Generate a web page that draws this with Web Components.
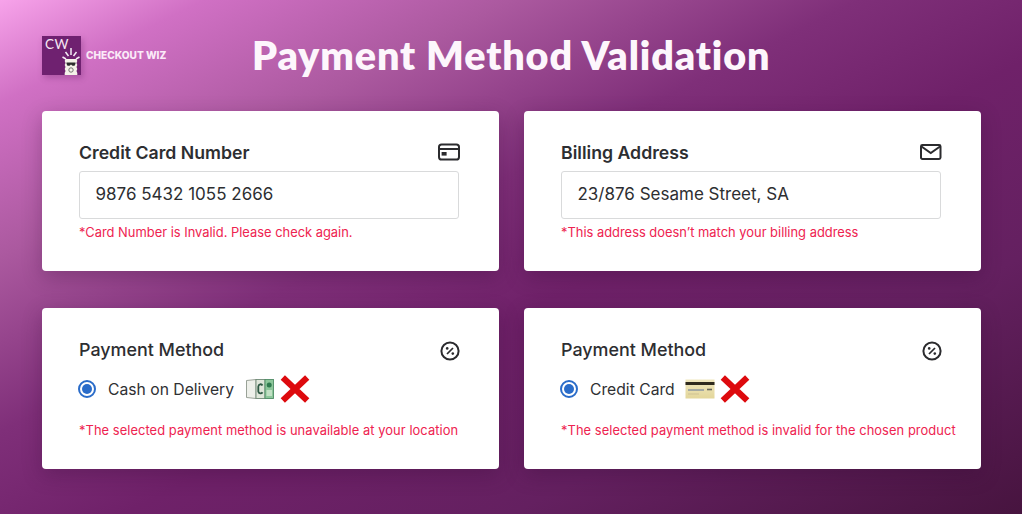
<!DOCTYPE html>
<html><head><meta charset="utf-8"><style>
html,body{margin:0;padding:0;}
body{width:1022px;height:514px;overflow:hidden;font-family:Inter,sans-serif;}
</style></head><body>
<checkout-page>
<pay-card slot="card" label="Credit Card Number" icon="card" strong>
<text-box>9876 5432 1055 2666</text-box>
<err-note>*Card Number is Invalid. Please check again.</err-note>
</pay-card>
<pay-card slot="card" label="Billing Address" icon="mail" strong>
<text-box>23/876 Sesame Street, SA</text-box>
<err-note>*This address doesn’t match your billing address</err-note>
</pay-card>
<pay-card slot="card" label="Payment Method" icon="percent">
<radio-row kind="cash">Cash on Delivery</radio-row>
<err-note spaced>*The selected payment method is unavailable at your location</err-note>
</pay-card>
<pay-card slot="card" label="Payment Method" icon="percent">
<radio-row kind="credit">Credit Card</radio-row>
<err-note spaced>*The selected payment method is invalid for the chosen product</err-note>
</pay-card>
</checkout-page>
<script>
const ICONS={
card:'<svg width="22" height="18" viewBox="0 0 22 18" fill="none" stroke="#2b2b2e" stroke-width="2"><rect x="1" y="1.5" width="20" height="15" rx="2.6"/><path d="M1 6h20"/><rect x="3.6" y="9" width="5" height="3.6" fill="#2b2b2e" stroke="none"/></svg>',
mail:'<svg width="22" height="18" viewBox="0 0 22 18" fill="none" stroke="#2b2b2e" stroke-width="2"><rect x="1" y="2" width="19.5" height="14" rx="1.4"/><path d="M1.5 3.500 10.750 10 20 3.500"/></svg>',
percent:'<svg width="20" height="20" viewBox="0 0 20 20" fill="none" stroke="#2b2b2e"><circle cx="10" cy="10" r="8.600" stroke-width="2"/><path d="M7 13 13 7" stroke-width="1.700"/><circle cx="7.200" cy="7.400" r="1.300" fill="#2b2b2e" stroke="none"/><circle cx="12.800" cy="12.600" r="1.300" fill="#2b2b2e" stroke="none"/></svg>'};
const CROSS='<svg width="30" height="28" viewBox="0 0 30 28"><path d="M2.800 2.500 27.200 25.500M27.200 2.500 2.800 25.500" stroke="#dd0a0e" stroke-width="6.200" fill="none"/></svg>';
const CASH='<svg width="29" height="20" viewBox="0 0 29 20"><path d="M1.500 1.500 11 .5V19.500L1.500 18.500Z" fill="#eef0ea" stroke="#8f978c" stroke-width=".9"/><rect x="11" y=".5" width="9" height="19" fill="#dfe6da" stroke="#6f8a76" stroke-width=".9"/><path d="M17.500 6.500c-1-2-4-1.500-4.200 1v5c.4 2.300 3.200 2.500 4.200.8" fill="none" stroke="#2f5a44" stroke-width="1.800"/><rect x="20" y=".5" width="8.500" height="19" fill="#8cc79a" stroke="#4f8c66" stroke-width=".9"/><circle cx="24.200" cy="6" r="2.500" fill="#2f7a4e"/><rect x="21.500" y="11" width="5.500" height="6" fill="#c1e0c4"/></svg>';
const CREDIT='<svg width="30" height="20" viewBox="0 0 30 20"><defs><linearGradient id="cg" x1="0" y1="0" x2="0" y2="1"><stop offset="0" stop-color="#f0e8c0"/><stop offset="1" stop-color="#e3d69a"/></linearGradient></defs><rect x="0.500" y="0.500" width="29" height="19" fill="url(#cg)"/><rect x="0.500" y="3" width="29" height="3" fill="#2e2a1e"/><path d="M3 11h16" stroke="#a3a8a2" stroke-width="2"/><path d="M22 10.500h5" stroke="#66665c" stroke-width="1.600"/><path d="M3 15h11" stroke="#cfc193"/></svg>';
function def(name,css,html){
  customElements.define(name,class extends HTMLElement{
    constructor(){super();const s=this.attachShadow({mode:'open'});s.innerHTML='<style>'+css+'</style>'+(typeof html==='function'?html(this):html);}
  });
}
def('cw-logo',`
:host{display:flex;align-items:center;gap:5px;width:210px;flex:none;position:relative;top:-1px}
.tile{width:39px;height:39px;background:#6f2170;position:relative;box-shadow:2px 3px 6px rgba(70,10,70,.25);flex:none;overflow:hidden}
.cw{position:absolute;left:3px;top:1px;color:#f6e7f4;font:400 13.500px/15px Lato,sans-serif;letter-spacing:.4px}
svg{position:absolute;left:20px;top:12px}
.name{font:800 10.100px/1 Inter,sans-serif;color:#fbeaf8;margin-top:1px;white-space:nowrap}
`,`<div class="tile"><span class="cw">CW</span><svg width="18" height="27" viewBox="0 0 18 27"><path d="M9 0v7M3.500 4l3 4M14.500 4l-3 4M.5 9l3.500 2M17.500 9l-3.500 2" stroke="#f5edf5" stroke-width="1.500"/><path d="M3.500 11h11l.8 2-.8 2 .8 2-.8 2 .8 2-.8 2 .8 2v2H2.700v-2l.8-2-.8-2 .8-2-.8-2 .8-2-.8-2z" fill="#f5f2e9"/><path d="M4.500 14.500h9v1.300l-1 2h-2l-1.500-1.300-1.500 1.300h-2l-1-2z" fill="#2d2d2d"/><circle cx="9" cy="22" r="2.200" fill="none" stroke="#666" stroke-width=".9"/></svg></div><span class="name">CHECKOUT WIZ</span>`);
def('page-title',`:host{display:block;font:800 39.500px/1 Lato,sans-serif;color:#fdf6fc;white-space:nowrap;letter-spacing:.88px;margin-top:-2px}`,`<slot></slot>`);
def('checkout-page',`
:host{display:block;width:1022px;height:514px;box-sizing:border-box;padding:35px 41px 0 42px;
 background:linear-gradient(to bottom right,#f7a3ea 0%,#d070c4 10%,#ab599f 25%,#7f2f79 42%,#6f2169 56%,#642060 75%,#47143f 100%);}
header{display:flex;align-items:center;height:42px;margin-bottom:34px}
main{display:grid;grid-template-columns:457px 457px;grid-template-rows:160px 161px;column-gap:25px;row-gap:37px}
`,`<header><cw-logo></cw-logo><page-title>Payment Method Validation</page-title></header><main><slot name="card"></slot></main>`);
def('pay-card',`
:host{display:block;box-sizing:border-box;background:#fff;border-radius:4px;padding:31px 38px 0 37px;color:#2f3033;box-shadow:0 6px 20px rgba(50,10,50,.28)}
.head{display:flex;justify-content:space-between;align-items:center;height:22px;font:500 17.900px/22px Inter,sans-serif;color:#2d2e31}
:host([strong]) .head{font-weight:600;font-size:17.700px}
.ic{display:flex;margin-right:1px;margin-top:-3px}
:host(:not([strong])) .ic{margin-top:1px}
`,h=>`<div class="head"><span>${h.getAttribute('label')}</span><span class="ic">${ICONS[h.getAttribute('icon')]}</span></div><slot></slot>`);
def('text-box',`
:host{display:block;box-sizing:border-box;height:48px;margin-top:7px;width:380px;border:1.500px solid #d9dadb;border-radius:3px;padding:0 15.500px;font:400 17px/44px Inter,sans-serif;color:#2d2e31;white-space:nowrap}
`,`<slot></slot>`);
def('err-note',`
:host{display:block;margin-top:5px;font:400 12.900px/18px Inter,sans-serif;color:#ee2350;white-space:nowrap}
:host([spaced]){margin-top:18px;letter-spacing:.06px}
`,`<slot></slot>`);
def('radio-row',`
:host{display:flex;align-items:center;height:30px;margin-top:13px;font:400 15.700px/30px Inter,sans-serif;color:#2f3033;white-space:nowrap}
.r{width:18px;height:18px;box-sizing:border-box;border:2px solid #2a6cc9;border-radius:50%;display:flex;align-items:center;justify-content:center;margin:0 12px 0 -1px;flex:none}
.r i{display:block;width:10px;height:10px;border-radius:50%;background:#2a6cc9}
.t{padding-top:2px}
.e{display:flex;margin-left:10px}.x{display:flex;margin-left:5px}
:host([kind=cash]) .e{margin-left:11px}:host([kind=cash]) .x{margin-left:6px}
`,h=>`<span class="r"><i></i></span><span class="t"><slot></slot></span><span class="e">${h.getAttribute('kind')==='cash'?CASH:CREDIT}</span><span class="x">${CROSS}</span>`);
</script>
</body></html>
